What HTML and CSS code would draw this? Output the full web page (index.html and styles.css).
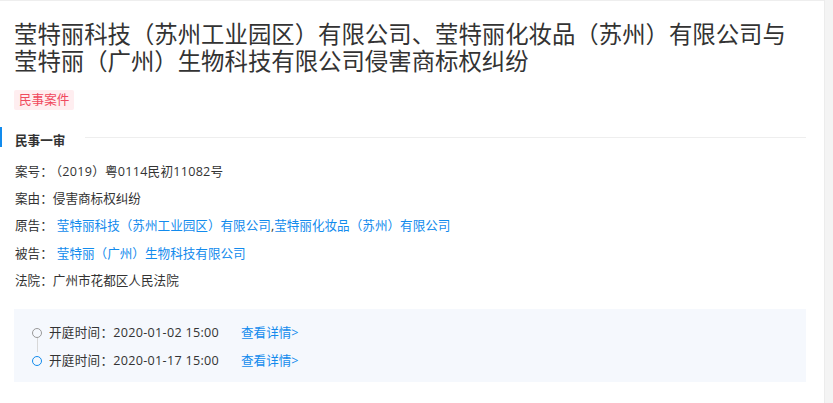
FILE: index.html
```html
<!DOCTYPE html>
<html lang="zh-CN">
<head>
    <meta charset="UTF-8">
    <meta name="viewport" content="width=device-width, initial-scale=1.0">
    <title>侵害商标权纠纷</title>
    <link rel="stylesheet" href="styles.css">
</head>
<body>
    <div class="page">
        <div class="main">
            <h1 class="title">莹特丽科技（苏州工业园区）有限公司、莹特丽化妆品（苏州）有限公司与莹特丽（广州）生物科技有限公司侵害商标权纠纷</h1>
            <span class="tag">民事案件</span>

            <div class="section-head">
                <span class="section-name">民事一审</span>
                <span class="section-line"></span>
            </div>

            <div class="info">
                <div class="row">案号：<span class="case-no">（2019）粤0114民初11082号</span></div>
                <div class="row">案由：侵害商标权纠纷</div>
                <div class="row">原告：<a class="link" href="#">莹特丽科技（苏州工业园区）有限公司</a>,<a class="link" href="#">莹特丽化妆品（苏州）有限公司</a></div>
                <div class="row">被告：<a class="link" href="#">莹特丽（广州）生物科技有限公司</a></div>
                <div class="row">法院：广州市花都区人民法院</div>
            </div>

            <div class="timeline">
                <div class="tl-row">
                    <span class="dot"></span>
                    <span class="tl-time">开庭时间：2020-01-02 15:00</span>
                    <a class="link" href="#">查看详情&gt;</a>
                </div>
                <div class="tl-row">
                    <span class="dot dot-active"></span>
                    <span class="tl-time">开庭时间：2020-01-17 15:00</span>
                    <a class="link" href="#">查看详情&gt;</a>
                </div>
            </div>
        </div>
        <div class="scrollbar"></div>
    </div>
</body>
</html>
```

FILE: styles.css
```css
body {
    margin: 0;
    font-family: "Open Sans", "Noto Sans CJK SC", sans-serif;
    background-color: #eeeeee;
    color: #333;
}

.page {
    display: flex;
    height: 403px;
}

.main {
    width: 824px;
    margin-top: 1px;
    background-color: #fff;
    padding: 20px 18px 0 0;
    box-sizing: border-box;
}

.scrollbar {
    flex: 1;
    background-color: #f4f4f4;
    border-left: 1px solid #ececec;
}

.title {
    margin: 0 0 0 14px;
    font-size: 23.4px;
    font-weight: normal;
    line-height: 27px;
    color: #333;
}

.tag {
    display: inline-block;
    margin: 15px 0 0 14px;
    padding: 0 5px;
    height: 20px;
    line-height: 20px;
    font-size: 12.6px;
    color: #f04a5e;
    background-color: #ffeef0;
    border-radius: 2px;
}

.section-head {
    display: flex;
    align-items: center;
    margin-top: 17px;
    height: 20px;
    border-left: 2px solid #128bed;
    padding-left: 13px;
}

.section-name {
    font-size: 12.6px;
    font-weight: bold;
    color: #333;
    margin-top: 5px;
}

.section-line {
    flex: 1;
    height: 1px;
    background-color: #eeeeee;
    margin-left: 20px;
}

.info {
    margin-top: 10px;
    padding-left: 15px;
}

.row {
    height: 27.5px;
    line-height: 27.5px;
    font-size: 12.6px;
    color: #333;
}

.row:first-child {
    line-height: 30px;
}

.case-no {
    margin-left: 3px;
    letter-spacing: 0.25px;
}

.link {
    color: #128bed;
    text-decoration: none;
}

.row .link:first-child {
    margin-left: 4px;
}

.timeline {
    margin: 14px 0 0 14px;
    padding: 9px 0 8px 18px;
    background-color: #f5f8fd;
}

.tl-row {
    position: relative;
    display: flex;
    align-items: center;
    height: 28px;
    font-size: 12.6px;
}

.tl-row + .tl-row::before {
    content: "";
    position: absolute;
    left: 5px;
    top: -8px;
    width: 1px;
    height: 14px;
    background-color: #d8d8d8;
}

.dot {
    width: 8px;
    height: 8px;
    border: 1.5px solid #999;
    border-radius: 50%;
    margin-right: 7px;
    margin-top: 3px;
}

.dot-active {
    border-color: #128bed;
}

.tl-time {
    color: #333;
    margin-right: 22px;
    letter-spacing: 0.28px;
}
```
